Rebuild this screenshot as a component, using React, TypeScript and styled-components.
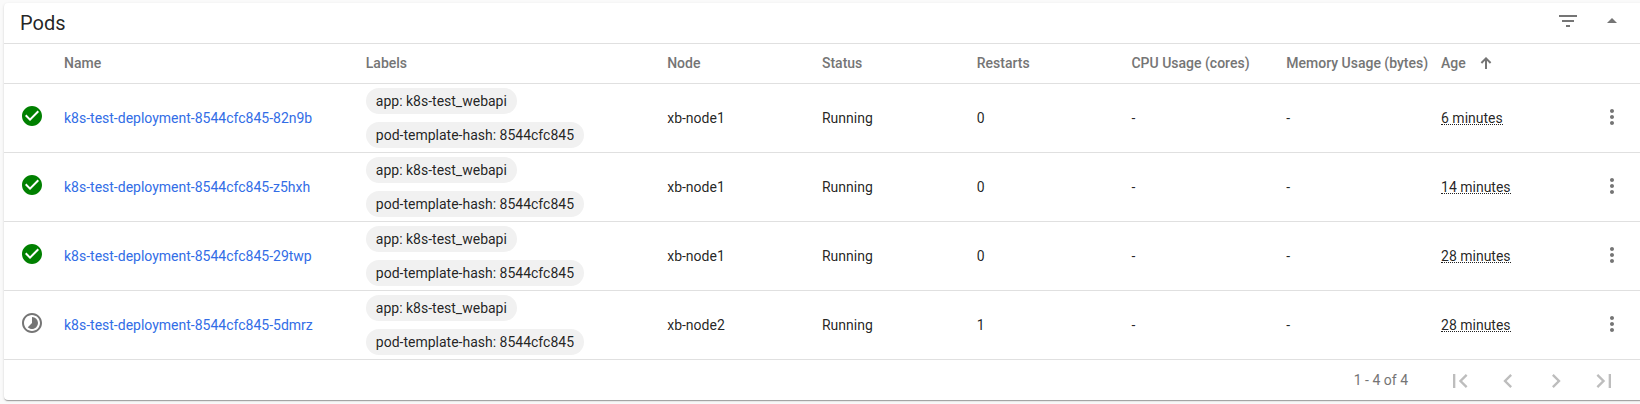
import React from "react";
import styled, { createGlobalStyle } from "styled-components";
import {
  MdArrowDropUp,
  MdCheckCircle,
  MdChevronLeft,
  MdChevronRight,
  MdFilterList,
  MdFirstPage,
  MdLastPage,
  MdMoreVert,
  MdTimelapse,
} from "react-icons/md";

const GlobalStyle = createGlobalStyle`
  * { box-sizing: border-box; }
  body {
    margin: 0;
    background: #fafafa;
    overflow: hidden;
    font-family: Roboto, sans-serif;
    font-size: 14px;
    color: rgba(0, 0, 0, 0.87);
  }
`;

const Page = styled.main`
  height: 404px;
  padding: 3px 0 0 4px;
  overflow: hidden;
`;

const Card = styled.section`
  width: 1640px;
  height: 397px;
  background: #fff;
  border-radius: 4px;
  box-shadow: 0 2px 1px -1px rgba(0, 0, 0, 0.2), 0 1px 1px 0 rgba(0, 0, 0, 0.14),
    0 1px 3px 0 rgba(0, 0, 0, 0.12);
`;

const CardHeader = styled.header`
  display: flex;
  align-items: flex-start;
  justify-content: space-between;
  height: 41px;
  padding: 6px 20px 0 16px;
  border-bottom: 1px solid #e0e0e0;
`;

const Title = styled.h1`
  margin: 0;
  font-size: 20px;
  font-weight: 400;
  line-height: 28px;
`;

const Actions = styled.div`
  display: flex;
  gap: 20px;
`;

const IconButton = styled.button<{ $size?: number; $faded?: boolean }>`
  display: flex;
  align-items: center;
  justify-content: center;
  width: ${(p) => p.$size ?? 24}px;
  height: ${(p) => p.$size ?? 24}px;
  padding: 0;
  border: 0;
  background: none;
  color: ${(p) => (p.$faded ? "#bdbdbd" : "#757575")};
`;

const Row = styled.div<{ $head?: boolean }>`
  display: grid;
  grid-template-columns: 44px 301.8px 301.4px repeat(5, 154.77px) 183px;
  align-items: center;
  height: ${(p) => (p.$head ? 40 : 69)}px;
  padding: ${(p) => (p.$head ? "0 0 2px 16px" : "0 0 0 16px")};
  border-bottom: 1px solid #e0e0e0;
  color: ${(p) => (p.$head ? "#757575" : "inherit")};
  font-weight: ${(p) => (p.$head ? 500 : 400)};
  line-height: 20px;
  white-space: nowrap;
`;

const StatusIcon = styled.span<{ $ready: boolean }>`
  display: flex;
  margin-bottom: 4px;
  color: ${(p) => (p.$ready ? "#008000" : "#757575")};
`;

const PodLink = styled.a`
  color: #326de6;
  text-decoration: none;
`;

const Chips = styled.div`
  display: flex;
  flex-direction: column;
  align-items: flex-start;
  gap: 8px;
`;

const Chip = styled.span`
  height: 26px;
  padding: 0 10px;
  border-radius: 13px;
  background: #f1f1f1;
  line-height: 26px;
`;

const AgeHead = styled.span`
  display: flex;
  align-items: center;
  gap: 14px;
`;

const SortIcon = styled.svg`
  flex: none;
  width: 12px;
  height: 12px;
`;

const AgeCell = styled.div`
  display: flex;
  align-items: center;
  justify-content: space-between;
`;

const AgeText = styled.span`
  height: 15px;
  margin-bottom: 2px;
  border-bottom: 1px dotted rgba(0, 0, 0, 0.87);
  line-height: 17px;
`;

const MenuSlot = styled.div`
  margin-bottom: 2px;
`;

const Paginator = styled.footer`
  display: flex;
  align-items: center;
  justify-content: flex-end;
  height: 40px;
  padding: 2px 20px 0 0;
  color: #757575;
`;

const Range = styled.span`
  margin-right: 32px;
  padding-bottom: 2px;
  line-height: 20px;
`;

const Pages = styled.nav`
  display: flex;
  gap: 8px;
`;

interface Pod {
  name: string;
  node: string;
  restarts: number;
  age: string;
  ready: boolean;
}

const pods: Pod[] = [
  { name: "k8s-test-deployment-8544cfc845-82n9b", node: "xb-node1", restarts: 0, age: "6 minutes", ready: true },
  { name: "k8s-test-deployment-8544cfc845-z5hxh", node: "xb-node1", restarts: 0, age: "14 minutes", ready: true },
  { name: "k8s-test-deployment-8544cfc845-29twp", node: "xb-node1", restarts: 0, age: "28 minutes", ready: true },
  { name: "k8s-test-deployment-8544cfc845-5dmrz", node: "xb-node2", restarts: 1, age: "28 minutes", ready: false },
];

const labels = ["app: k8s-test_webapi", "pod-template-hash: 8544cfc845"];

const SortArrow = () => (
  <SortIcon viewBox="0 0 12 12" fill="none" stroke="#757575" strokeWidth="2">
    <path d="M6 12V1.5M1.4 6L6 1.4L10.6 6" />
  </SortIcon>
);

const PodRow = ({ pod }: { pod: Pod }) => (
  <Row>
    <StatusIcon $ready={pod.ready}>
      {pod.ready ? <MdCheckCircle size={24} /> : <MdTimelapse size={24} />}
    </StatusIcon>
    <PodLink>{pod.name}</PodLink>
    <Chips>
      {labels.map((label) => (
        <Chip key={label}>{label}</Chip>
      ))}
    </Chips>
    <span>{pod.node}</span>
    <span>Running</span>
    <span>{pod.restarts}</span>
    <span>-</span>
    <span>-</span>
    <AgeCell>
      <AgeText>{pod.age}</AgeText>
      <MenuSlot>
        <IconButton aria-label="More">
          <MdMoreVert size={24} />
        </IconButton>
      </MenuSlot>
    </AgeCell>
  </Row>
);

export default function App() {
  return (
    <Page>
      <GlobalStyle />
      <Card>
        <CardHeader>
          <Title>Pods</Title>
          <Actions>
            <IconButton aria-label="Filter">
              <MdFilterList size={24} />
            </IconButton>
            <IconButton aria-label="Collapse">
              <MdArrowDropUp size={24} />
            </IconButton>
          </Actions>
        </CardHeader>
        <Row $head>
          <span />
          <span>Name</span>
          <span>Labels</span>
          <span>Node</span>
          <span>Status</span>
          <span>Restarts</span>
          <span>CPU Usage (cores)</span>
          <span>Memory Usage (bytes)</span>
          <AgeHead>
            Age
            <SortArrow />
          </AgeHead>
        </Row>
        {pods.map((pod) => (
          <PodRow key={pod.name} pod={pod} />
        ))}
        <Paginator>
          <Range>1 - 4 of 4</Range>
          <Pages>
            <IconButton $size={40} $faded aria-label="First page">
              <MdFirstPage size={28} />
            </IconButton>
            <IconButton $size={40} $faded aria-label="Previous page">
              <MdChevronLeft size={28} />
            </IconButton>
            <IconButton $size={40} $faded aria-label="Next page">
              <MdChevronRight size={28} />
            </IconButton>
            <IconButton $size={40} $faded aria-label="Last page">
              <MdLastPage size={28} />
            </IconButton>
          </Pages>
        </Paginator>
      </Card>
    </Page>
  );
}
